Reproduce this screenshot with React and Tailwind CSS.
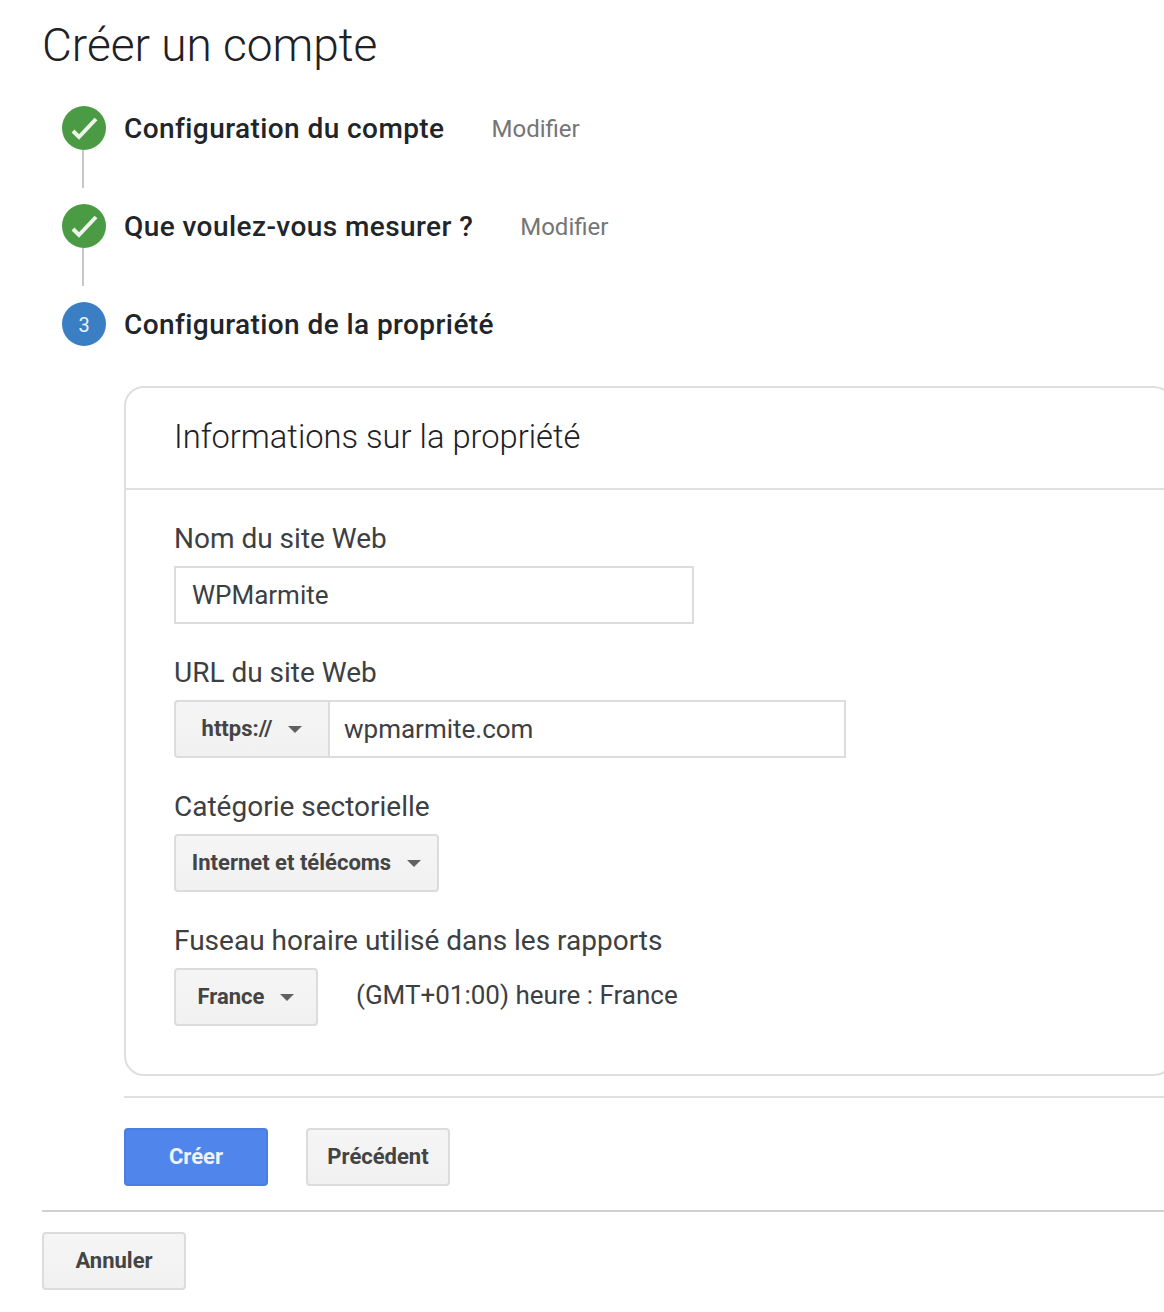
import React from 'react';

function Check() {
    return (
        <svg viewBox="0 0 44 44" className="w-[44px] h-[44px]">
            <circle cx="22" cy="22" r="22" fill="#4b9b45" />
            <path d="M11 25 L17 31 L34 13" fill="none" stroke="#eef6ec" strokeWidth="4" />
        </svg>
    );
}

function Step({ icon, title, edit, line }) {
    return (
        <div className="flex">
            <div className="w-[44px] flex flex-col items-start shrink-0">
                {icon}
                {line && <div className="ml-[20px] w-[2px] h-[38px] bg-[#c8c8c8]" />}
            </div>
            <div className="ml-[18px] h-[44px] pt-[2px] flex items-center">
                <span className="text-[28px] font-medium tracking-[0.42px] text-[#212529]">{title}</span>
                {edit && <span className="ml-[47px] text-[24px] text-[#757575]">Modifier</span>}
            </div>
        </div>
    );
}

function Caret() {
    return <span className="ml-[16px] mt-[2px] w-0 h-0 border-x-[7px] border-x-transparent border-t-[7px] border-t-[#616161]" />;
}

function GreyButton({ className, children }) {
    return (
        <div className={`h-[58px] pb-[2px] flex items-center justify-center rounded-[4px] border-2 border-[#dcdcdc] bg-gradient-to-b from-[#f5f5f5] to-[#f1f1f1] text-[22px] font-bold text-[#444444] ${className}`}>
            {children}
        </div>
    );
}

function Label({ children }) {
    return <div className="text-[28px] leading-[36px] text-[#3c4043]">{children}</div>;
}

export default function App() {
    return (
        <div className="w-[1164px] h-[1312px] overflow-hidden bg-white font-['Roboto',sans-serif]">
            <div className="pl-[42px] pt-[16px]">
                <h1 className="text-[46px] leading-[58px] font-light text-[#202124]">Créer un compte</h1>

                <div className="ml-[20px] mt-[32px] flex flex-col gap-[16px]">
                    <Step icon={<Check />} title="Configuration du compte" edit line />
                    <Step icon={<Check />} title="Que voulez-vous mesurer ?" edit line />
                    <Step
                        icon={<div className="w-[44px] h-[44px] pt-[1px] rounded-full bg-[#3a7fc4] flex items-center justify-center text-[20px] text-[#e8f3ff]">3</div>}
                        title="Configuration de la propriété"
                    />
                </div>

                <div className="ml-[82px] mt-[40px]">
                    <div className="w-[1050px] h-[690px] rounded-[20px] border-2 border-[#dfdfdf]">
                        <div className="h-[102px] pl-[48px] flex items-center border-b-2 border-[#dfdfdf]">
                            <h2 className="text-[32.7px] font-light text-[#202124]">Informations sur la propriété</h2>
                        </div>
                        <div className="pl-[48px] pt-[31px]">
                            <Label>Nom du site Web</Label>
                            <div className="mt-[9px] w-[520px] h-[58px] border-2 border-[#dcdcdc] pl-[16px] flex items-center text-[26px] text-[#3c4043]">WPMarmite</div>

                            <div className="mt-[31px]"><Label>URL du site Web</Label></div>
                            <div className="mt-[9px] flex h-[58px] w-[672px]">
                                <div className="w-[156px] pb-[2px] border-2 border-[#dcdcdc] bg-gradient-to-b from-[#f5f5f5] to-[#f1f1f1] flex items-center justify-center rounded-l-[4px] text-[22px] font-bold text-[#444444]">
                                    https://<Caret />
                                </div>
                                <div className="flex-1 border-2 border-l-0 border-[#dcdcdc] pl-[14px] flex items-center text-[26px] text-[#3c4043]">wpmarmite.com</div>
                            </div>

                            <div className="mt-[31px]"><Label>Catégorie sectorielle</Label></div>
                            <GreyButton className="mt-[9px] w-[265px]">Internet et télécoms<Caret /></GreyButton>

                            <div className="mt-[31px]"><Label>Fuseau horaire utilisé dans les rapports</Label></div>
                            <div className="mt-[9px] flex items-center">
                                <GreyButton className="w-[144px]">France<Caret /></GreyButton>
                                <span className="ml-[38px] mb-[4px] text-[26px] text-[#3c4043]">(GMT+01:00) heure : France</span>
                            </div>
                        </div>
                    </div>

                    <div className="mt-[20px] h-[2px] bg-[#e0e0e0]" />

                    <div className="mt-[30px] flex gap-[38px]">
                        <div className="w-[144px] h-[58px] pb-[2px] flex items-center justify-center rounded-[4px] border-2 border-[#4a7fe0] bg-[#5086ec] text-[22px] font-bold text-[#eef4fe]">Créer</div>
                        <GreyButton className="w-[144px]">Précédent</GreyButton>
                    </div>
                </div>

                <div className="mt-[24px] h-[2px] bg-[#d0d0d0]" />
                <GreyButton className="mt-[20px] w-[144px]">Annuler</GreyButton>
            </div>
        </div>
    );
}
